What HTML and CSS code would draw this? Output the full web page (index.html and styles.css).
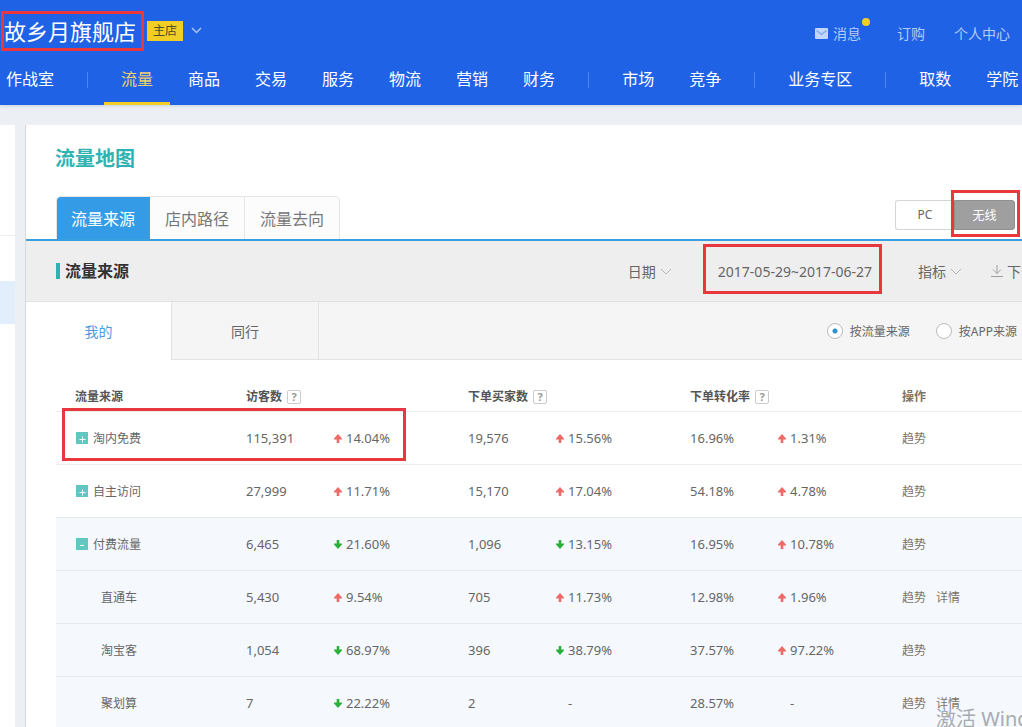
FILE: index.html
```html
<!DOCTYPE html>
<html lang="zh-CN">
<head>
<meta charset="utf-8">
<title>流量地图</title>
<link rel="stylesheet" href="styles.css">
</head>
<body>
<header class="header">
  <div class="topbar">
    <h1 class="shop mark">故乡月旗舰店</h1>
    <span class="badge">主店</span>
    <button class="icon-btn" aria-label="切换店铺"><svg width="11" height="7" viewBox="0 0 11 7"><path d="M1 1l4.5 4.5L10 1" fill="none" stroke="#a9c5f8" stroke-width="1.5"/></svg></button>
    <div class="user-links">
      <a class="message" href="#"><svg width="13" height="11" viewBox="0 0 13 11"><rect width="13" height="11" rx="1" fill="#c3d6fb"/><path d="M1.500 2.500l5 4 5-4" fill="none" stroke="#7ea6f3" stroke-width="1.200"/></svg>消息<i class="dot"></i></a>
      <a href="#">订购</a>
      <a href="#">个人中心</a>
    </div>
  </div>
  <nav class="nav">
    <a href="#">作战室</a><i class="sep"></i>
    <a class="active" href="#">流量</a><a href="#">商品</a><a href="#">交易</a><a href="#">服务</a><a href="#">物流</a><a href="#">营销</a><a href="#">财务</a><i class="sep"></i>
    <a href="#">市场</a><a href="#">竞争</a><i class="sep"></i>
    <a href="#">业务专区</a><i class="sep"></i>
    <a href="#">取数</a><a href="#">学院</a>
  </nav>
</header>
<div class="layout">
  <aside class="side"><div class="side-top"></div><div class="side-group"></div><div class="side-current"></div></aside>
  <main class="main">
    <h2 class="page-title">流量地图</h2>
    <div class="tabs-row">
      <div class="tabs">
        <button class="tab on">流量来源</button><button class="tab">店内路径</button><button class="tab">流量去向</button>
      </div>
      <div class="switch">
        <button class="seg">PC</button><button class="seg on mark">无线</button>
      </div>
    </div>
    <div class="toolbar">
      <h3 class="section-title">流量来源</h3>
      <div class="tools">
        <button class="tool">日期<svg width="12" height="7" viewBox="0 0 12 7"><path d="M1 1l5 5 5-5" fill="none" stroke="#b5b5b5"/></svg></button>
        <button class="tool date mark">2017-05-29~2017-06-27</button>
        <button class="tool">指标<svg width="12" height="7" viewBox="0 0 12 7"><path d="M1 1l5 5 5-5" fill="none" stroke="#b5b5b5"/></svg></button>
        <button class="tool"><svg width="12" height="12" viewBox="0 0 12 12"><path d="M6 0v8.500M2 4.500l4 4 4-4M0 11.500h12" fill="none" stroke="#a0a0a0"/></svg>下载</button>
      </div>
    </div>
    <div class="subbar">
      <button class="subtab on">我的</button><button class="subtab">同行</button>
      <div class="radios">
        <label><input type="radio" name="by" checked>按流量来源</label>
        <label><input type="radio" name="by">按APP来源</label>
      </div>
    </div>
    <table class="table">
      <colgroup><col class="c-name"><col class="c-num"><col class="c-rate"><col class="c-num"><col class="c-rate"><col class="c-num"><col class="c-last"><col></colgroup>
      <thead>
        <tr><th>流量来源</th><th colspan="2">访客数<button class="help">?</button></th><th colspan="2">下单买家数<button class="help">?</button></th><th colspan="2">下单转化率<button class="help">?</button></th><th class="op">操作</th></tr>
      </thead>
      <tbody>
        <tr><td class="name row-mark"><button class="fold" aria-label="展开"><svg width="12" height="12" viewBox="0 0 12 12"><path d="M3.500 7.500h6M6.500 4.500v6" stroke="#fff" fill="none"/></svg></button>淘内免费</td><td>115,391</td><td class="up">14.04%</td><td>19,576</td><td class="up">15.56%</td><td>16.96%</td><td class="up">1.31%</td><td class="op"><a href="#">趋势</a></td></tr>
        <tr><td class="name"><button class="fold" aria-label="展开"><svg width="12" height="12" viewBox="0 0 12 12"><path d="M3.500 7.500h6M6.500 4.500v6" stroke="#fff" fill="none"/></svg></button>自主访问</td><td>27,999</td><td class="up">11.71%</td><td>15,170</td><td class="up">17.04%</td><td>54.18%</td><td class="up">4.78%</td><td class="op"><a href="#">趋势</a></td></tr>
        <tr class="tint"><td class="name"><button class="fold" aria-label="收起"><svg width="12" height="12" viewBox="0 0 12 12"><path d="M4 7.500h4" stroke="#fff" fill="none"/></svg></button>付费流量</td><td>6,465</td><td class="down">21.60%</td><td>1,096</td><td class="down">13.15%</td><td>16.95%</td><td class="up">10.78%</td><td class="op"><a href="#">趋势</a></td></tr>
        <tr class="tint"><td class="name child">直通车</td><td>5,430</td><td class="up">9.54%</td><td>705</td><td class="up">11.73%</td><td>12.98%</td><td class="up">1.96%</td><td class="op"><a href="#">趋势</a><a href="#">详情</a></td></tr>
        <tr class="tint"><td class="name child">淘宝客</td><td>1,054</td><td class="down">68.97%</td><td>396</td><td class="down">38.79%</td><td>37.57%</td><td class="up">97.22%</td><td class="op"><a href="#">趋势</a></td></tr>
        <tr class="tint"><td class="name child">聚划算</td><td>7</td><td class="down">22.22%</td><td>2</td><td class="flat">-</td><td>28.57%</td><td class="flat">-</td><td class="op"><a href="#">趋势</a><a href="#">详情</a></td></tr>
      </tbody>
    </table>
  </main>
</div>
<div class="watermark">激活 Windows</div>
<script src="arrows.js"></script>
</body>
</html>
```
FILE: arrows.js
```js
const shapes = {
  up: ['M4 0L8 4.500V5.500H5.300V9H2.700V5.500H0V4.500Z', '#ee6a66'],
  down: ['M4 9L8 4.500V3.500H5.300V0H2.700V3.500H0V4.500Z', '#2bb03a']
};
for (const [kind, [d, fill]] of Object.entries(shapes)) {
  document.querySelectorAll('td.' + kind).forEach(cell => {
    cell.insertAdjacentHTML('afterbegin',
      `<svg class="arrow" width="8" height="9" viewBox="0 0 8 9"><path d="${d}" fill="${fill}"/></svg>`);
  });
}
```
FILE: styles.css
```css
* { box-sizing: border-box; }
html, body { height: 100%; }
body {
  margin: 0;
  display: flex;
  flex-direction: column;
  position: relative;
  overflow: hidden;
  white-space: nowrap;
  background: #eceff4;
  color: #666;
  font: 12px "Noto Sans", "Noto Sans CJK SC", sans-serif;
}
a { color: inherit; text-decoration: none; }
button { margin: 0; padding: 0; border: 0; background: none; color: inherit; font: inherit; }
h1, h2, h3 { margin: 0; }
svg { display: block; flex: none; }

/* Red highlight frames */
.mark { position: relative; }
.mark::after, .row-mark::after { content: ""; position: absolute; inset: 0; border: 3px solid #e8383d; pointer-events: none; }

.header { flex: none; background: #1f62e6; color: #fff; box-shadow: 0 1px 3px #c5d3dc; z-index: 1; }
.topbar { display: flex; align-items: center; height: 61px; padding: 0 12px 0 1px; }
.shop { padding: 0 8px 0 3px; font-size: 22px; font-weight: 400; line-height: 40px; }
.badge { margin-left: 3px; padding: 0 6px; background: #f2cd24; color: #4f4b33; line-height: 20px; }
.icon-btn { margin-left: 8px; }
.user-links { display: flex; gap: 29px; margin-left: auto; padding-top: 6px; font-size: 14px; line-height: 20px; color: #b4ccfa; }
.message { display: flex; align-items: center; gap: 5px; position: relative; margin-right: 7px; }
.dot { position: absolute; top: -6px; right: -9px; width: 8px; height: 8px; border-radius: 50%; background: #f7cf1d; }
.nav { display: flex; gap: 1px; height: 44px; font-size: 16px; line-height: 36px; }
.nav a { flex: none; padding: 0 17px; }
.nav a:first-child { padding-left: 6px; }
.nav .active { color: #f0d268; border-bottom: 3px solid #f2cd24; }
.sep { flex: none; width: 1px; height: 16px; margin: 11px 15px 0; background: #4f86ee; }

.layout { display: flex; flex: 1; min-height: 0; padding-top: 20px; }
.side { flex: none; width: 15px; margin-right: 10px; background: #fff; }
.side-top { height: 111px; border-bottom: 1px solid #eceff4; }
.side-group { height: 45px; }
.side-current { height: 43px; background: #e3eefd; }
.main { flex: 1; min-width: 0; border-left: 1px solid #d5d8de; background: #fff; }
.page-title { padding: 19px 0 0 29px; color: #2fb3b0; font-size: 20px; line-height: 30px; }

.tabs-row { display: flex; justify-content: space-between; align-items: center; margin-top: 22px; padding: 0 7px 0 30px; border-bottom: 2px solid #3a9fdf; }
.tabs { display: flex; border: 1px solid #e6e6e6; border-bottom: 0; border-radius: 5px 5px 0 0; overflow: hidden; background: #fcfcfc; }
.tab { height: 42px; padding: 0 15px; border-right: 1px solid #e6e6e6; color: #777; font-size: 16px; }
.tab:last-child { border-right: 0; }
.tab.on { padding: 0 14px; border-color: #349ce6; background: #349ce6; color: #fff; }
.switch { display: flex; margin-bottom: 6px; }
.seg { width: 59px; height: 30px; border: 1px solid #d5d5d5; border-right: 0; border-radius: 3px 0 0 3px; }
.seg.on { width: 61px; border: 1px solid #909090; border-radius: 0 3px 3px 0; background: #9f9f9f; color: #fff; }
.seg.on::after { inset: -11px -6px -8px -4px; }

.toolbar { display: flex; justify-content: space-between; align-items: center; height: 61px; padding-left: 30px; border-bottom: 1px solid #e2e2e2; background: #eee; }
.section-title { padding-left: 5px; border-left: 4px solid #2fb3b0; color: #333; font-size: 16px; line-height: 16px; }
.tools { display: flex; align-items: center; gap: 29px; margin-right: -13px; font-size: 14px; }
.tool { display: flex; align-items: center; gap: 4px; }
.tool.date { height: 50px; margin: 0 7px 0 2px; padding: 0 10px 0 15px; }
.tool.date::after { inset: -2px 0 2px 0; }

.subbar { display: flex; align-items: center; background: #f5f5f5; box-shadow: inset 0 -1px #e2e2e2; }
.subtab { width: 147px; height: 58px; border-right: 1px solid #e2e2e2; font-size: 14px; }
.subtab.on { width: 146px; background: #fff; color: #4a9be0; }
.radios { display: flex; gap: 26px; margin-left: auto; padding-right: 5px; }
.radios label { display: flex; align-items: center; gap: 7px; }
.radios input { appearance: none; width: 16px; height: 16px; margin: 0; border: 1px solid #bbb; border-radius: 50%; background: #fff; }
.radios input:checked { background: radial-gradient(circle, #2b8fd0 2px, #fff 3px); }

.table { width: calc(100% - 30px); margin: 21px 0 0 30px; border-collapse: collapse; table-layout: fixed; }
.c-name { width: 190px; }
.c-num { width: 88px; }
.c-rate { width: 134px; }
.c-last { width: 124px; }
th { height: 30px; padding: 0; color: #555; text-align: left; }
th:first-child { padding-left: 19px; }
td { height: 53px; padding: 0; border-top: 1px solid #ececef; font-size: 13px; }
.tint { background: #f5f9fd; }
.tint td { border-color: #e4eaf1; }
.name { position: relative; padding-left: 20px; font-size: 12px; }
.child { padding-left: 45px; }
.row-mark::after { inset: -4px -160px 3px 6px; }
.fold { display: inline-block; margin-right: 5px; background: #62c7c0; vertical-align: -1px; }
.help { width: 14px; height: 14px; margin-left: 5px; border: 1px solid #ccc; border-radius: 2px; color: #999; font-size: 11px; line-height: 12px; }
.arrow { display: inline-block; margin-right: 4px; }
.flat { padding-left: 12px; }
.op { color: #7d7364; font-size: 12px; }
.op a { margin-right: 10px; }
.watermark { position: absolute; left: calc(100% - 86px); bottom: -7px; color: #a7abb0; font-size: 20px; line-height: 30px; pointer-events: none; }
```
